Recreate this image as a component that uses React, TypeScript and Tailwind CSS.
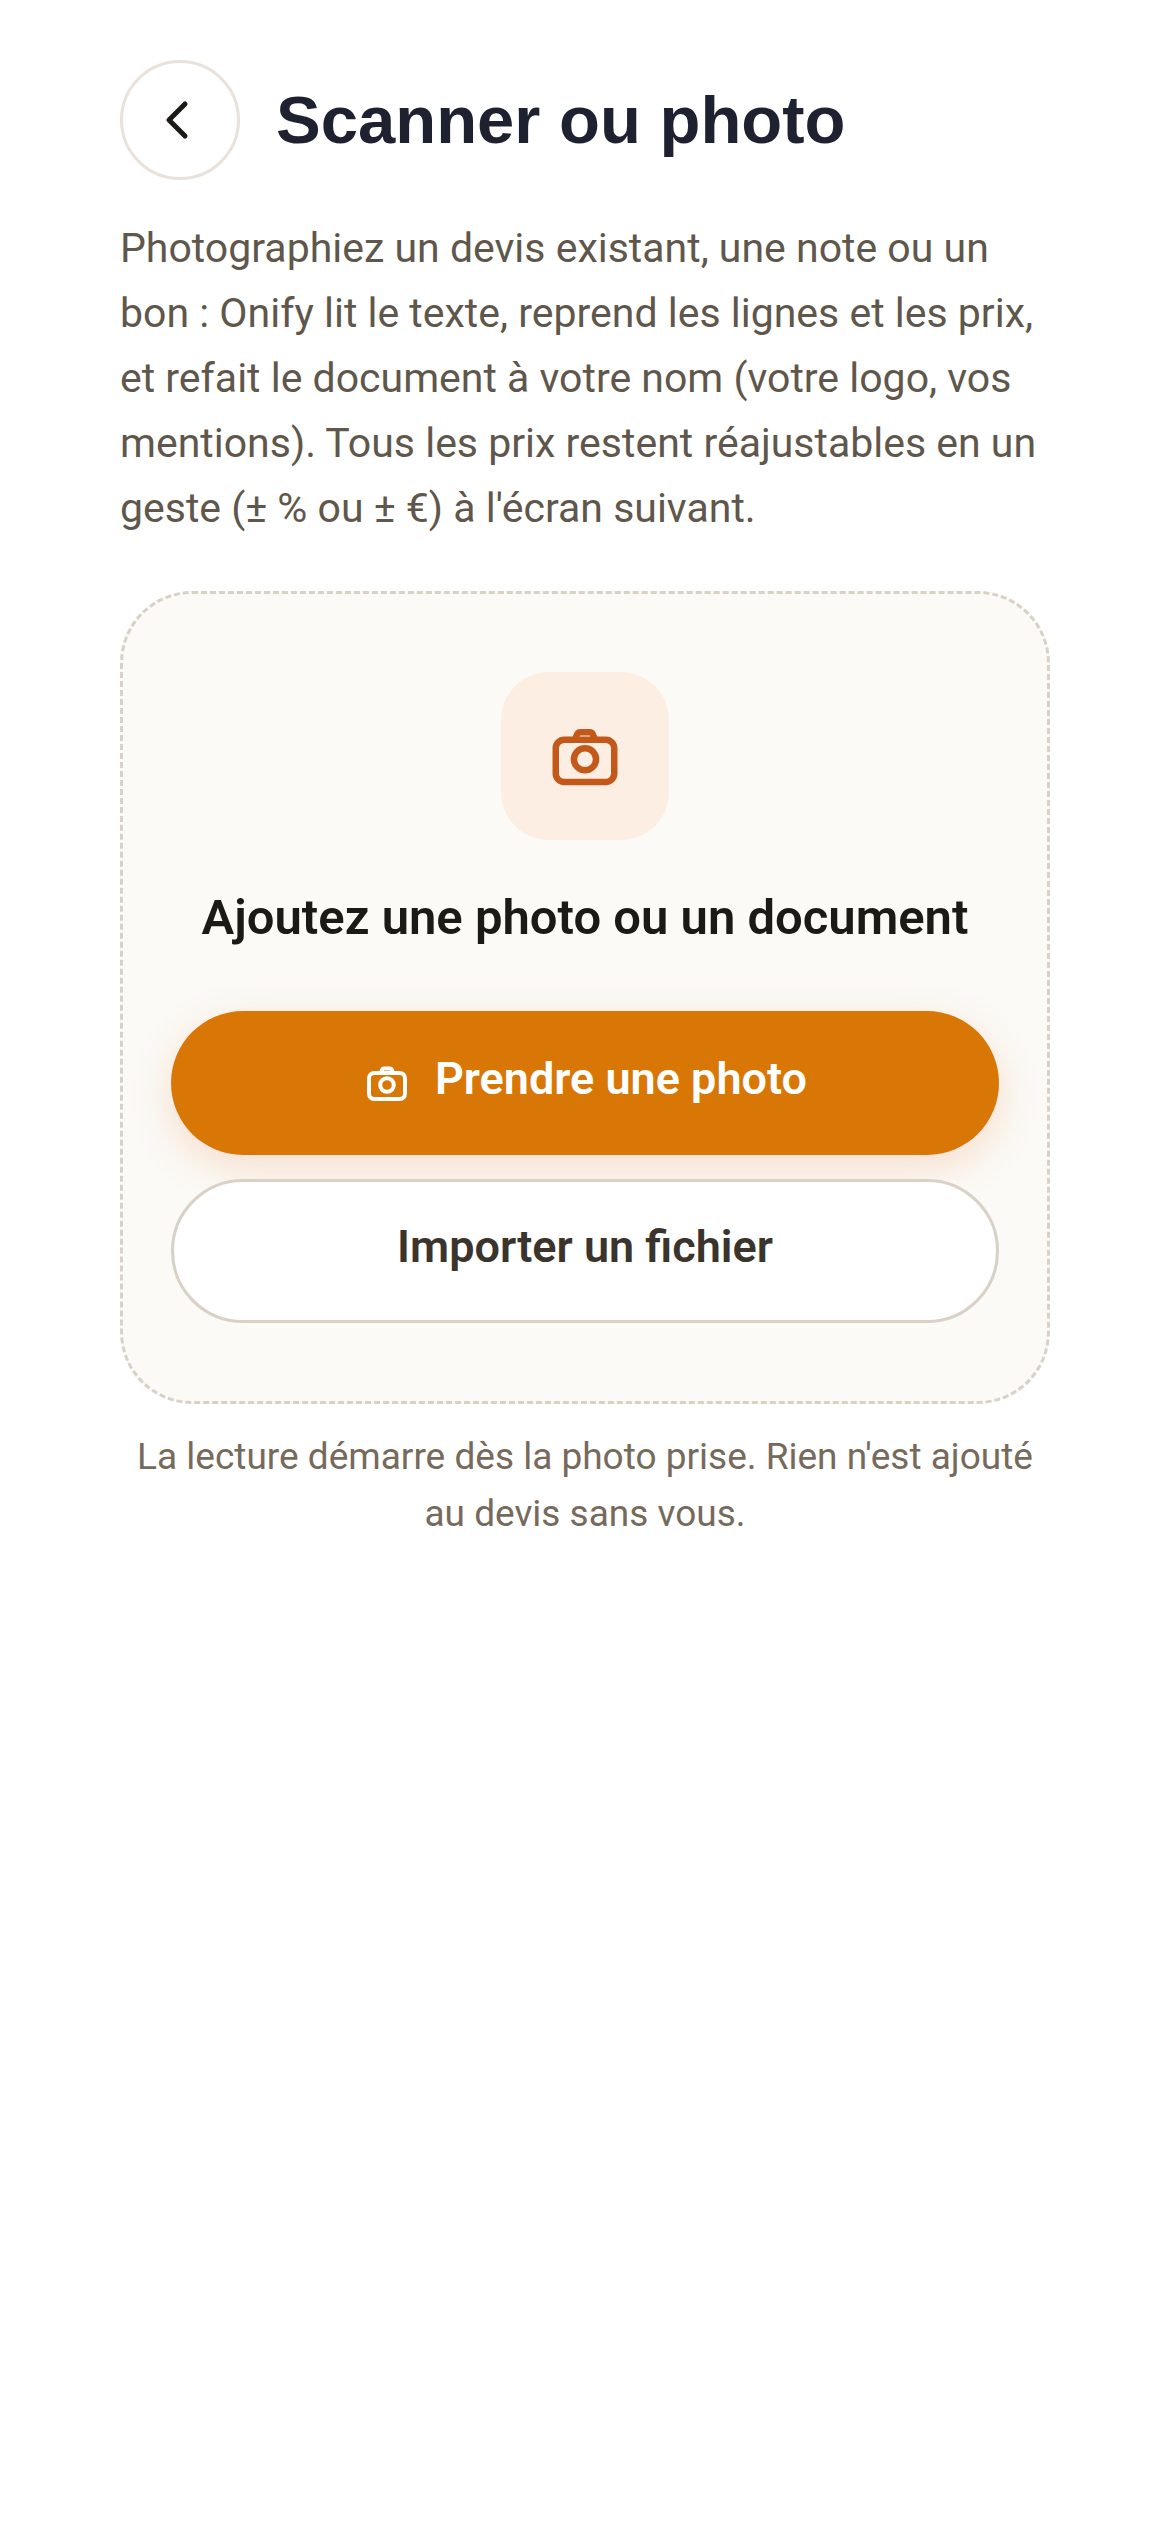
interface IconProps { className?: string; }

function CameraIcon({ className }: IconProps) {
  return (
    <svg viewBox="0 0 24 24" fill="none" stroke="currentColor" strokeWidth="2" strokeLinecap="round" strokeLinejoin="round" className={className} aria-hidden="true">
      <rect x="3" y="7" width="18" height="13" rx="2.6" />
      <path d="M8.9 7l.7-1.7c.2-.4.5-.6.9-.6h3c.4 0 .7.2.9.6l.7 1.7" />
      <circle cx="12" cy="13" r="3.4" />
    </svg>
  );
}

function BackIcon({ className }: IconProps) {
  return (
    <svg viewBox="0 0 24 24" fill="none" stroke="currentColor" strokeWidth="2" strokeLinecap="round" strokeLinejoin="round" className={className} aria-hidden="true">
      <path d="M14 5.6L7.6 12l6.4 6.4" />
    </svg>
  );
}

export default function App() {
  return (
    <main className="min-h-screen bg-white px-[120px] pt-[60px] pb-12 font-['Roboto',sans-serif]">
      <header className="flex items-center gap-9">
        <button type="button" aria-label="Retour" className="flex size-[120px] shrink-0 items-center justify-center rounded-full border-3 border-[#e8e2da] bg-white text-[#1c1a17]">
          <BackIcon className="size-[60px]" />
        </button>
        <h1 className="font-['Liberation_Sans',sans-serif] text-[67px] leading-[80px] font-bold text-[#1e2130]">Scanner ou photo</h1>
      </header>

      <p className="mt-9 text-[41px] leading-[65px] text-[#5f574b]">
        Photographiez un devis existant, une note ou un bon : Onify lit le texte, reprend les lignes et les prix, et refait le document à votre nom (votre logo, vos mentions). Tous les prix restent réajustables en un geste (± % ou ± €) à l'écran suivant.
      </p>

      <section className="mt-[50px] flex flex-col items-center rounded-[72px] border-3 border-dashed border-[#d9d1c6] bg-[#fbfaf6] px-12 py-[78px]">
        <div className="flex size-[168px] items-center justify-center rounded-[48px] bg-[#fceee2] text-[#c2591a]">
          <CameraIcon className="size-[78px]" />
        </div>
        <h2 className="mt-12 text-center text-[49px] leading-[60px] font-semibold text-[#1c1a17]">Ajoutez une photo ou un document</h2>
        <div className="mt-[63px] flex w-full flex-col gap-6 text-[45px] leading-[54px] font-semibold">
          <button type="button" className="flex h-36 w-full items-center justify-center gap-6 rounded-full bg-[#d97706] text-white shadow-[0_12px_42px_rgba(234,88,12,0.18)]">
            <CameraIcon className="size-12" />
            <span className="pb-2">Prendre une photo</span>
          </button>
          <button type="button" className="relative flex h-36 w-full items-center justify-center rounded-full border-3 border-[#d9d1c6] bg-white text-[#3a342d]">
            <span className="pb-2">Importer un fichier</span>
          </button>
        </div>
      </section>

      <p className="mt-6 text-center text-[37px] leading-[57px] text-[#766a5c]">
        La lecture démarre dès la photo prise. Rien n'est ajouté au devis sans vous.
      </p>
    </main>
  );
}
